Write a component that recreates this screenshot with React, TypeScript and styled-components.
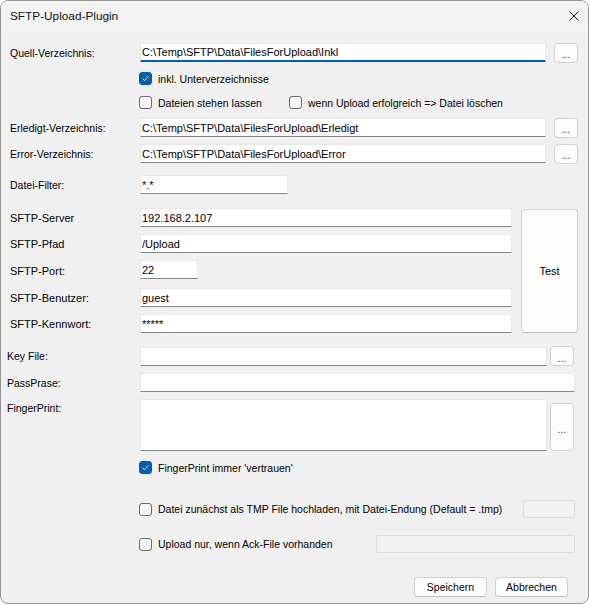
import styled, { createGlobalStyle } from "styled-components";

const GlobalStyle = createGlobalStyle`
  html, body {
    margin: 0;
    padding: 0;
    background: #ffffff;
    font-family: "Liberation Sans", Arial, sans-serif;
  }
`;

const Window = styled.div`
  box-sizing: border-box;
  width: 589px;
  height: 604px;
  border: 1px solid #959595;
  border-radius: 8px;
  background: #f0f0f0;
  overflow: hidden;
  display: flex;
  flex-direction: column;
  color: #000;
`;

const TitleBar = styled.div`
  height: 30px;
  flex: none;
  background: #f3f3f3;
  display: flex;
  align-items: center;
  justify-content: space-between;
  padding: 0 9px 0 9px;
`;

const Title = styled.span`
  font-size: 11.8px;
  color: #111;
`;

const CloseIcon = styled.svg`
  width: 10px;
  height: 10px;
  display: block;
`;

const Body = styled.div`
  flex: 1;
  display: flex;
  flex-direction: column;
  padding: 0 10px 0 9px;
`;

const Row = styled.div<{ $mt: number; $h?: number; $align?: string }>`
  display: flex;
  align-items: ${(p) => p.$align ?? "center"};
  margin-top: ${(p) => p.$mt}px;
  height: ${(p) => p.$h ?? 19}px;
  flex: none;
`;

const CheckRow = styled(Row)`
  padding-left: 129px;
`;

const Label = styled.label<{ $size?: number; $shift?: number; $pt?: number }>`
  flex: none;
  width: ${(p) => 130 + (p.$shift ?? 0)}px;
  margin-left: ${(p) => -(p.$shift ?? 0)}px;
  padding-top: ${(p) => p.$pt ?? 0}px;
  font-size: ${(p) => p.$size ?? 10.5}px;
  white-space: nowrap;
`;

const TextInput = styled.input<{ $w?: number; $focused?: boolean }>`
  box-sizing: border-box;
  height: 19px;
  ${(p) => (p.$w ? `width: ${p.$w}px; flex: none;` : "flex: 1; min-width: 0;")}
  border: 1px solid #e8e8e8;
  border-bottom: ${(p) => (p.$focused ? "2px solid #005fb8" : "1px solid #868686")};
  border-radius: 1px;
  background: #ffffff;
  font-family: "Liberation Sans", Arial, sans-serif;
  font-size: 11px;
  color: #000;
  padding: 0 0 0 1px;
  margin: 0;
  outline: none;
`;

const DisabledInput = styled.div<{ $w: number }>`
  box-sizing: border-box;
  width: ${(p) => p.$w}px;
  height: 18px;
  flex: none;
  margin-left: auto;
  margin-right: 3px;
  border: 1px solid #dedede;
  border-radius: 2px;
  background: #f2f2f2;
`;

const MultiInput = styled.textarea`
  box-sizing: border-box;
  flex: 1;
  height: 52px;
  border: 1px solid #e8e8e8;
  border-bottom: 1px solid #868686;
  background: #ffffff;
  resize: none;
  margin: 0;
  outline: none;
  font-family: "Liberation Sans", Arial, sans-serif;
  font-size: 11px;
`;

const SmallButton = styled.button<{ $gap: number; $h?: number; $mr?: number; $self?: string }>`
  box-sizing: border-box;
  flex: none;
  width: 24px;
  height: ${(p) => p.$h ?? 20}px;
  margin-left: ${(p) => p.$gap}px;
  margin-right: ${(p) => p.$mr ?? 0}px;
  align-self: ${(p) => p.$self ?? "center"};
  border: 1px solid #d2d2d2;
  border-radius: 4px;
  background: #fdfdfd;
  font-family: "Liberation Sans", Arial, sans-serif;
  font-size: 10px;
  color: #3a2a55;
  padding: 4px 0 0 0;
  cursor: default;
`;

const PushButton = styled.button<{ $w: number; $h: number; $ml?: number }>`
  box-sizing: border-box;
  width: ${(p) => p.$w}px;
  height: ${(p) => p.$h}px;
  margin-left: ${(p) => p.$ml ?? 0}px;
  flex: none;
  border: 1px solid #d0d0d0;
  border-bottom-color: #bcbcbc;
  border-radius: 4px;
  background: #fdfdfd;
  font-family: "Liberation Sans", Arial, sans-serif;
  font-size: 10.5px;
  color: #000;
  padding: 0;
  cursor: default;
`;

const CheckItem = styled.label<{ $w?: number }>`
  display: flex;
  align-items: center;
  gap: 6px;
  font-size: 10.5px;
  white-space: nowrap;
  ${(p) => (p.$w ? `width: ${p.$w}px; flex: none;` : "")}
`;

const Box = styled.span<{ $checked?: boolean }>`
  box-sizing: border-box;
  width: 13px;
  height: 13px;
  flex: none;
  border-radius: 3px;
  display: flex;
  align-items: center;
  justify-content: center;
  background: ${(p) => (p.$checked ? "#005fb8" : "#f6f6f6")};
  border: 1px solid ${(p) => (p.$checked ? "#005fb8" : "#6b6b6b")};
`;

const SftpGroup = styled.div`
  display: grid;
  grid-template-columns: 130px 372px 57px;
  grid-template-rows: 19px 19px 21px 19px 19px;
  row-gap: 7px;
  column-gap: 0;
  align-items: center;
  margin-top: 14px;
  flex: none;
`;

const SftpLabel = styled.label`
  font-size: 11px;
  white-space: nowrap;
`;

const PortInput = styled(TextInput)`
  align-self: start;
`;

const TestButton = styled(PushButton)`
  grid-column: 3;
  grid-row: 1 / -1;
  align-self: start;
  margin-top: 1px;
  margin-left: 9px;
  font-size: 11px;
`;

const Footer = styled(Row)`
  justify-content: flex-end;
  padding-right: 10px;
`;

const Check = ({ checked, text, w }: { checked?: boolean; text: string; w?: number }) => (
  <CheckItem $w={w}>
    <Box $checked={checked}>
      {checked && (
        <svg width="9" height="9" viewBox="0 0 9 9">
          <path d="M1.6 4.7 L3.6 6.6 L7.4 2.4" fill="none" stroke="#ffffff" strokeWidth="1" />
        </svg>
      )}
    </Box>
    {text}
  </CheckItem>
);

const sftpRows = [
  { label: "SFTP-Server", value: "192.168.2.107" },
  { label: "SFTP-Pfad", value: "/Upload" },
  { label: "SFTP-Port:", value: "22", port: true },
  { label: "SFTP-Benutzer:", value: "guest" },
  { label: "SFTP-Kennwort:", value: "*****" },
];

export default function App() {
  return (
    <>
      <GlobalStyle />
      <Window>
        <TitleBar>
          <Title>SFTP-Upload-Plugin</Title>
          <CloseIcon viewBox="0 0 10 10">
            <path d="M0.5 0.5 L9.5 9.5 M9.5 0.5 L0.5 9.5" stroke="#1a1a1a" strokeWidth="1" />
          </CloseIcon>
        </TitleBar>
        <Body>
          <Row $mt={12}>
            <Label>Quell-Verzeichnis:</Label>
            <TextInput $focused readOnly defaultValue="C:\Temp\SFTP\Data\FilesForUpload\Inkl" />
            <SmallButton $gap={8}>...</SmallButton>
          </Row>
          <CheckRow $mt={10} $h={13}>
            <Check checked text="inkl. Unterverzeichnisse" />
          </CheckRow>
          <CheckRow $mt={11} $h={13}>
            <Check text="Dateien stehen lassen" w={150} />
            <Check text="wenn Upload erfolgreich => Datei löschen" />
          </CheckRow>
          <Row $mt={9}>
            <Label>Erledigt-Verzeichnis:</Label>
            <TextInput readOnly defaultValue="C:\Temp\SFTP\Data\FilesForUpload\Erledigt" />
            <SmallButton $gap={8}>...</SmallButton>
          </Row>
          <Row $mt={7}>
            <Label>Error-Verzeichnis:</Label>
            <TextInput readOnly defaultValue="C:\Temp\SFTP\Data\FilesForUpload\Error" />
            <SmallButton $gap={8}>...</SmallButton>
          </Row>
          <Row $mt={12}>
            <Label>Datei-Filter:</Label>
            <TextInput $w={148} readOnly defaultValue="*.*" />
          </Row>
          <SftpGroup>
            {sftpRows.map((r) => [
              <SftpLabel key={r.label + "-l"}>{r.label}</SftpLabel>,
              r.port ? (
                <PortInput key={r.label + "-i"} $w={58} readOnly defaultValue={r.value} />
              ) : (
                <TextInput key={r.label + "-i"} readOnly defaultValue={r.value} />
              ),
            ])}
            <TestButton $w={57} $h={124}>
              Test
            </TestButton>
          </SftpGroup>
          <Row $mt={13} $h={20}>
            <Label $shift={3}>Key File:</Label>
            <TextInput readOnly defaultValue="" />
            <SmallButton $gap={3} $mr={4}>
              ...
            </SmallButton>
          </Row>
          <Row $mt={7}>
            <Label $shift={3}>PassPrase:</Label>
            <TextInput readOnly defaultValue="" style={{ marginRight: 3 }} />
          </Row>
          <Row $mt={7} $h={52} $align="flex-start">
            <Label $shift={3} $pt={3}>
              FingerPrint:
            </Label>
            <MultiInput readOnly defaultValue="" />
            <SmallButton $gap={3} $mr={4} $h={48} $self="flex-start" style={{ marginTop: 4 }}>
              ...
            </SmallButton>
          </Row>
          <CheckRow $mt={10} $h={13}>
            <Check checked text="FingerPrint immer 'vertrauen'" />
          </CheckRow>
          <CheckRow $mt={26} $h={18}>
            <Check text="Datei zunächst als TMP File hochladen, mit Datei-Endung (Default = .tmp)" />
            <DisabledInput $w={52} />
          </CheckRow>
          <CheckRow $mt={17} $h={18}>
            <Check text="Upload nur, wenn Ack-File vorhanden" />
            <DisabledInput $w={199} />
          </CheckRow>
          <Footer $mt={24} $h={20}>
            <PushButton $w={73} $h={20}>
              Speichern
            </PushButton>
            <PushButton $w={73} $h={20} $ml={8}>
              Abbrechen
            </PushButton>
          </Footer>
        </Body>
      </Window>
    </>
  );
}
